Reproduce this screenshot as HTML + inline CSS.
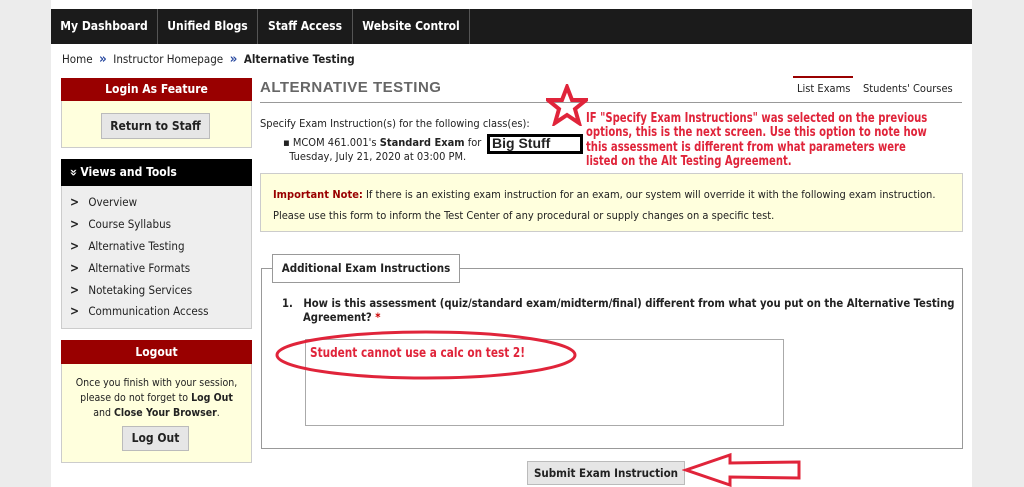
<!DOCTYPE html>
<html><head><meta charset="utf-8"><style>
*{margin:0;padding:0;box-sizing:border-box}
body{width:1024px;height:487px;background:#ececec;font-family:"DejaVu Sans Condensed","Liberation Sans",sans-serif;font-size:11px;color:#222;position:relative;overflow:hidden}
.a{position:absolute}
#page{left:51px;top:0;width:921px;height:487px;background:#fff}
#nav{left:51px;top:9px;width:921px;height:35px;background:#1b1b1b}
#nav div{position:absolute;top:0;height:35px;line-height:35px;color:#fff;font-weight:bold;font-size:12px;text-align:center;border-right:1px solid #555}
.hd{color:#fff;font-weight:bold;font-size:12px;text-align:center}
.btn{background:#e6e6e6;border:1px solid #bbb;font-weight:bold;font-size:12px;text-align:center;color:#222}
.li{left:70px;font-size:11.5px;color:#222}
.li b{font-size:12px;margin-right:6px}
.red{color:#e0243a;font-weight:bold}
.bc{color:#2a4aa0;font-weight:bold;font-size:13px}
</style></head><body>
<div class="a" id="page"></div>
<div class="a" id="nav">
<div style="left:0;width:107px">My Dashboard</div>
<div style="left:107px;width:100px">Unified Blogs</div>
<div style="left:207px;width:95px">Staff Access</div>
<div style="left:302px;width:117px">Website Control</div>
</div>
<div class="a" style="left:62px;top:52px;font-size:11.5px">Home&nbsp; <span class="bc">»</span>&nbsp; Instructor Homepage&nbsp; <span class="bc">»</span>&nbsp; <b>Alternative Testing</b></div>

<div class="a" style="left:61px;top:78px;width:191px;height:70px;background:#ffffdd;border:1px solid #ccc"></div>
<div class="a hd" style="left:61px;top:78px;width:191px;height:23px;line-height:23px;background:#990000">Login As Feature</div>
<div class="a btn" style="left:101px;top:113px;width:109px;height:26px;line-height:24px">Return to Staff</div>

<div class="a" style="left:61px;top:159px;width:191px;height:170px;background:#eee;border:1px solid #ccc"></div>
<div class="a hd" style="left:61px;top:159px;width:191px;height:27px;line-height:27px;background:#000;text-align:left;padding-left:8px"><span style="display:inline-block;transform:rotate(90deg);font-size:13px">»</span> Views and Tools</div>
<div class="a li" style="top:195px"><b>&gt;</b> Overview</div>
<div class="a li" style="top:217px"><b>&gt;</b> Course Syllabus</div>
<div class="a li" style="top:239px"><b>&gt;</b> Alternative Testing</div>
<div class="a li" style="top:261px"><b>&gt;</b> Alternative Formats</div>
<div class="a li" style="top:283px"><b>&gt;</b> Notetaking Services</div>
<div class="a li" style="top:304px"><b>&gt;</b> Communication Access</div>

<div class="a" style="left:61px;top:340px;width:191px;height:123px;background:#ffffdd;border:1px solid #ccc"></div>
<div class="a hd" style="left:61px;top:340px;width:191px;height:24px;line-height:24px;background:#990000">Logout</div>
<div class="a" style="left:61px;top:376px;width:191px;text-align:center;font-size:10.5px;line-height:15px">Once you finish with your session,<br>please do not forget to <b>Log Out</b><br>and <b>Close Your Browser</b>.</div>
<div class="a btn" style="left:122px;top:426px;width:67px;height:25px;line-height:23px">Log Out</div>

<div class="a" style="left:260px;top:79px;font-size:15px;font-weight:bold;color:#666;font-family:'Liberation Sans',sans-serif;letter-spacing:0.5px">ALTERNATIVE TESTING</div>
<div class="a" style="left:260px;top:102px;width:702px;height:1px;background:#999"></div>
<div class="a" style="left:793px;top:76px;width:60px;height:2px;background:#990000"></div>
<div class="a" style="left:797px;top:82px;font-size:11px">List Exams</div>
<div class="a" style="left:863px;top:82px;font-size:11px">Students' Courses</div>

<div class="a" style="left:260px;top:117px;font-size:11px">Specify Exam Instruction(s) for the following class(es):</div>
<div class="a" style="left:283px;top:136px;font-size:11px;line-height:14px">▪ MCOM 461.001's <b>Standard Exam</b> for<br>&nbsp;&nbsp;Tuesday, July 21, 2020 at 03:00 PM.</div>
<div class="a" style="left:487px;top:134px;width:96px;height:20px;border:3px solid #000;font-weight:bold;font-size:14px;line-height:13px;padding-left:2px;font-family:'Liberation Sans',sans-serif">Big Stuff</div>

<svg class="a" style="left:546px;top:84px" width="42" height="42" viewBox="0 0 42 42"><polygon points="21,3 26,16 40,16 29,25 33,39 21,31 9,39 13,25 2,16 16,16" fill="none" stroke="#e0243a" stroke-width="4" stroke-linejoin="miter"/></svg>
<div class="a red" style="left:586px;top:112px;font-size:13px;line-height:14.3px;transform:scaleX(0.86);transform-origin:0 0;white-space:nowrap">IF "Specify Exam Instructions" was selected on the previous<br>options, this is the next screen. Use this option to note how<br>this assessment is different from what parameters were<br>listed on the Alt Testing Agreement.</div>

<div class="a" style="left:260px;top:173px;width:703px;height:59px;background:#ffffdd;border:1px solid #ccc"></div>
<div class="a" style="left:273px;top:184px;font-size:11px;line-height:21px"><b style="color:#990000">Important Note:</b> If there is an existing exam instruction for an exam, our system will override it with the following exam instruction.<br>Please use this form to inform the Test Center of any procedural or supply changes on a specific test.</div>

<div class="a" style="left:261px;top:268px;width:702px;height:181px;border:1px solid #999"></div>
<div class="a" style="left:272px;top:254px;width:188px;height:29px;border:1px solid #999;background:#fff;font-weight:bold;font-size:11.5px;line-height:27px;text-align:center">Additional Exam Instructions</div>
<div class="a" style="left:282px;top:297px;font-size:11.2px;line-height:14px;font-weight:bold;white-space:nowrap">1.&nbsp;&nbsp;&nbsp;How is this assessment (quiz/standard exam/midterm/final) different from what you put on the Alternative Testing<br>&nbsp;&nbsp;&nbsp;&nbsp;&nbsp;&nbsp;Agreement? <span style="color:#c00">*</span></div>
<div class="a" style="left:305px;top:339px;width:479px;height:87px;border:1px solid #aaa"></div>
<div class="a red" style="left:310px;top:346px;font-size:13px;transform:scaleX(0.9);transform-origin:0 0;white-space:nowrap">Student cannot use a calc on test 2!</div>
<svg class="a" style="left:272px;top:328px" width="310" height="56"><ellipse cx="154" cy="27" rx="149" ry="23" fill="none" stroke="#e0243a" stroke-width="3"/></svg>

<div class="a btn" style="left:527px;top:461px;width:158px;height:24px;line-height:22px;font-size:11.5px">Submit Exam Instruction</div>
<svg class="a" style="left:682px;top:452px" width="122" height="35"><polygon points="4,18 48,3 48,11 117,10 117,26 48,25 48,33" fill="none" stroke="#e0243a" stroke-width="3"/></svg>
</body></html>
